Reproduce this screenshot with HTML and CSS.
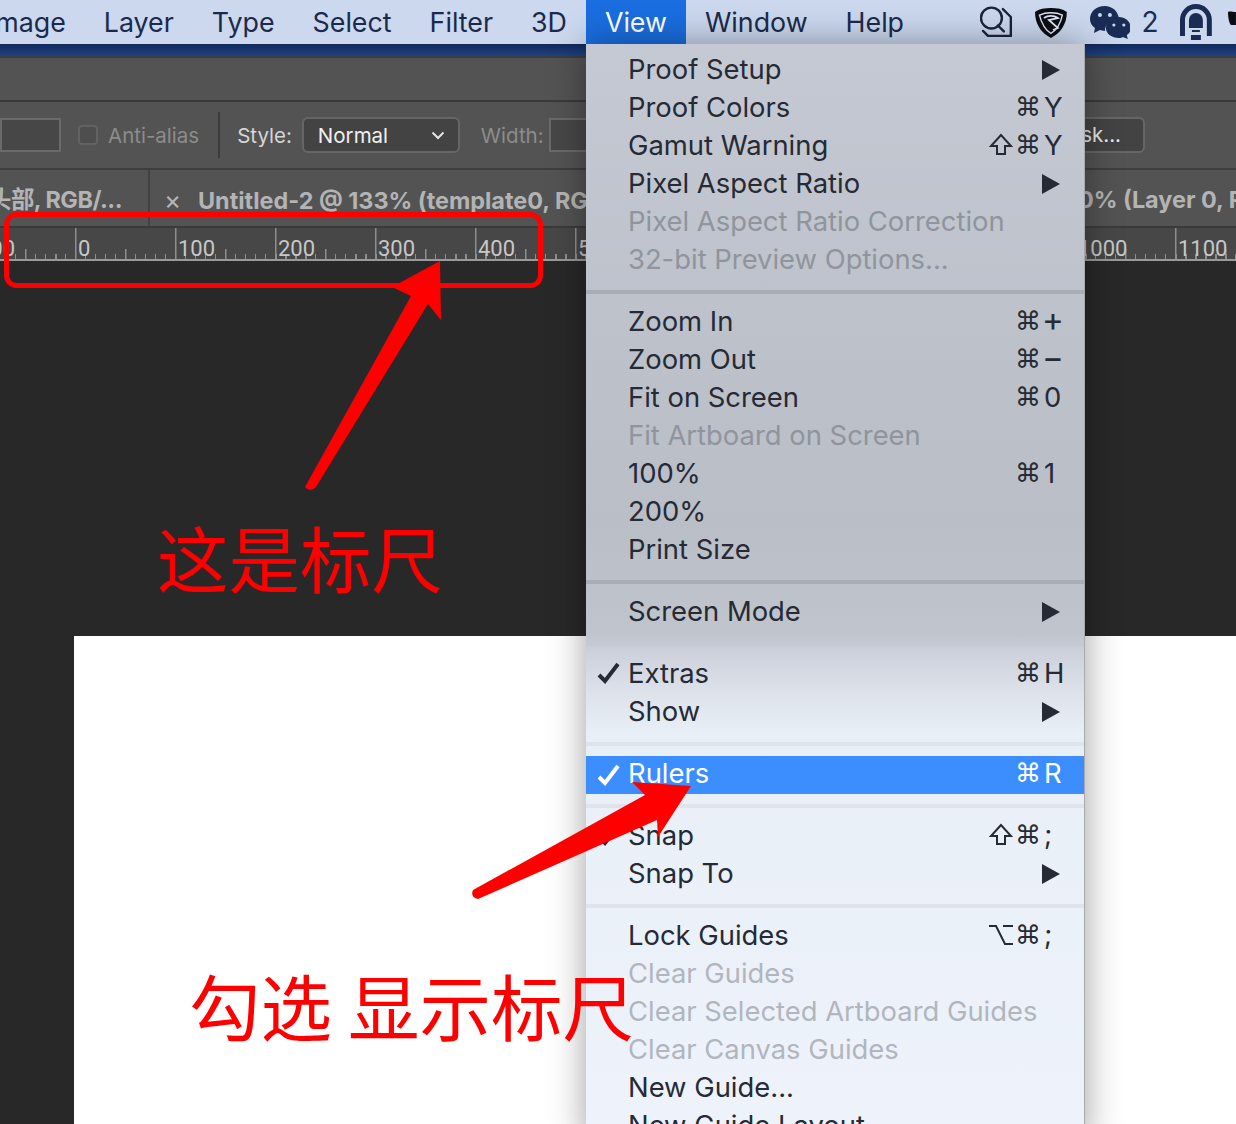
FILE: index.html
```html
<!DOCTYPE html>
<html lang="zh-CN">
<head>
  <meta charset="UTF-8" />
  <title>Rulers</title>
  <link rel="stylesheet" href="styles.css">
</head>
<body>
  <header class="menubar">
    <nav class="menus">
      <span class="menu-item">Image</span>
      <span class="menu-item">Layer</span>
      <span class="menu-item">Type</span>
      <span class="menu-item">Select</span>
      <span class="menu-item">Filter</span>
      <span class="menu-item">3D</span>
      <span class="menu-item open">View</span>
      <span class="menu-item">Window</span>
      <span class="menu-item">Help</span>
    </nav>
    <div class="tray">
      <svg class="icon-search" width="34" height="36" viewBox="0 0 34 36" fill="none" stroke="#1b2438" stroke-width="2.400" stroke-linecap="round" stroke-linejoin="round">
        <circle cx="11.500" cy="14" r="10.500"/>
        <path d="M18 21.500l6 6"/>
        <path d="M23 5l8 8v19H8l-5-5"/>
      </svg>
      <svg class="icon-shield" width="34" height="32" viewBox="0 0 34 32">
        <path d="M17 1C11 1 5 2 1 5c0 12 6 21 16 26 10-5 16-14 16-26-4-3-10-4-16-4z" fill="#0b0d14"/>
        <path d="M5.500 8C7 14 10 22 17 26.500 24 22 27 15 28.500 8 22 5 12 5 5.500 8z" fill="none" stroke="#dfe6f4" stroke-width="1.400"/>
        <path d="M10 11c4-3 10-3 14 0l-9 2 9 8-5 2" fill="none" stroke="#dfe6f4" stroke-width="1.800"/>
      </svg>
      <svg class="icon-wechat" width="42" height="34" viewBox="0 0 42 34">
        <path d="M16 1C7 1 1 7 1 14c0 4 2 7 5 9l-1 5 6-3c1 0 3 1 5 1 0-7 7-14 14-13C29 6 23 1 16 1z" fill="#1b2c54"/>
        <path d="M30 12c-7 0-13 5-13 11s6 10 13 10c2 0 3 0 4-1l5 2-1-4c3-2 4-4 4-7 0-6-5-11-12-11z" fill="#1b2c54"/>
        <circle cx="11" cy="10" r="2" fill="#cbd8ee"/><circle cx="21" cy="10" r="2" fill="#cbd8ee"/>
        <circle cx="25" cy="20" r="1.600" fill="#cbd8ee"/><circle cx="35" cy="20" r="1.600" fill="#cbd8ee"/>
      </svg>
      <span class="tray-count">2</span>
      <svg class="icon-tunnel" width="32" height="36" viewBox="0 0 32 36">
        <path d="M0 32V16a16 16 0 0 1 32 0v16h-5V16a11 11 0 0 0-22 0v16z" fill="#1b2c54"/>
        <path d="M9 16a7 7 0 0 1 14 0v8H9z" fill="#1b2c54"/>
        <path d="M12 26h8v2h-8zM11 31h10v5H11z" fill="#1b2c54"/>
      </svg>
      <svg class="icon-apple" width="8" height="18" viewBox="0 0 8 18">
        <path d="M0 5c2-1 4 0 8 0v13H3C1 16 0 10 0 5z" fill="#0b0d14"/>
      </svg>
    </div>
  </header>
  <div class="desktop-strip"></div>
  <div class="title-bar"></div>

  <div class="options-bar">
    <div class="field field-feather"></div>
    <div class="checkbox"></div>
    <span class="opt-muted">Anti-alias</span>
    <div class="opt-divider"></div>
    <span class="opt-label">Style:</span>
    <div class="select">
      <span>Normal</span>
      <svg width="14" height="9" viewBox="0 0 14 9" fill="none" stroke="#e4e4e4" stroke-width="2"><path d="M1.500 1.500L7 7l5.500-5.500"/></svg>
    </div>
    <span class="opt-muted opt-width">Width:</span>
    <div class="field field-width"></div>
    <div class="opt-button">sk...</div>
  </div>

  <div class="tabs">
    <div class="tab tab-first">头部, RGB/...</div>
    <div class="tab tab-second"><span class="tab-close">×</span>Untitled-2 @ 133% (template0, RGB/8)</div>
    <div class="tab tab-third">0% (Layer 0, RGB/8)</div>
  </div>

  <div class="ruler">
    <span class="ruler-cell">100</span>
    <span class="ruler-cell">0</span>
    <span class="ruler-cell">100</span>
    <span class="ruler-cell">200</span>
    <span class="ruler-cell">300</span>
    <span class="ruler-cell">400</span>
    <span class="ruler-cell">500</span>
    <span class="ruler-cell"></span>
    <span class="ruler-cell"></span>
    <span class="ruler-cell"></span>
    <span class="ruler-cell"></span>
    <span class="ruler-cell">1000</span>
    <span class="ruler-cell">1100</span>
    <span class="ruler-cell"></span>
  </div>

  <main class="workspace">
    <div class="document"></div>
  </main>

  <!-- View menu -->
  <div class="dropdown">
    <div class="row"><span class="label">Proof Setup</span><span class="sub"></span></div>
    <div class="row"><span class="label">Proof Colors</span><span class="mods">⌘</span><span class="key">Y</span></div>
    <div class="row"><span class="label">Gamut Warning</span><span class="mods"><svg class="mod-icon" width="24" height="24" viewBox="0 0 24 24" fill="none" stroke="currentColor" stroke-width="2"><path d="M12 2L2 13h6v8h8v-8h6z"/></svg>⌘</span><span class="key">Y</span></div>
    <div class="row"><span class="label">Pixel Aspect Ratio</span><span class="sub"></span></div>
    <div class="row off"><span class="label">Pixel Aspect Ratio Correction</span></div>
    <div class="row off"><span class="label">32-bit Preview Options...</span></div>
    <div class="sep dark"></div>
    <div class="row"><span class="label">Zoom In</span><span class="mods">⌘</span><span class="key key-math">+</span></div>
    <div class="row"><span class="label">Zoom Out</span><span class="mods">⌘</span><span class="key key-math">−</span></div>
    <div class="row"><span class="label">Fit on Screen</span><span class="mods">⌘</span><span class="key">0</span></div>
    <div class="row off"><span class="label">Fit Artboard on Screen</span></div>
    <div class="row"><span class="label">100%</span><span class="mods">⌘</span><span class="key">1</span></div>
    <div class="row"><span class="label">200%</span></div>
    <div class="row"><span class="label">Print Size</span></div>
    <div class="sep dark"></div>
    <div class="row"><span class="label">Screen Mode</span><span class="sub"></span></div>
    <div class="sep mid"></div>
    <div class="row">
      <svg class="check" width="24" height="22" viewBox="0 0 24 22" fill="none" stroke="currentColor" stroke-width="4"><path d="M2 13l6 6L21 2"/></svg>
      <span class="label">Extras</span><span class="mods">⌘</span><span class="key">H</span>
    </div>
    <div class="row"><span class="label">Show</span><span class="sub"></span></div>
    <div class="sep"></div>
    <div class="row active">
      <svg class="check" width="24" height="22" viewBox="0 0 24 22" fill="none" stroke="currentColor" stroke-width="4"><path d="M2 13l6 6L21 2"/></svg>
      <span class="label">Rulers</span><span class="mods">⌘</span><span class="key">R</span>
    </div>
    <div class="sep after-active"></div>
    <div class="row">
      <svg class="check" width="24" height="22" viewBox="0 0 24 22" fill="none" stroke="currentColor" stroke-width="4"><path d="M2 13l6 6L21 2"/></svg>
      <span class="label">Snap</span><span class="mods"><svg class="mod-icon" width="24" height="24" viewBox="0 0 24 24" fill="none" stroke="currentColor" stroke-width="2"><path d="M12 2L2 13h6v8h8v-8h6z"/></svg>⌘</span><span class="key key-semi">;</span>
    </div>
    <div class="row"><span class="label">Snap To</span><span class="sub"></span></div>
    <div class="sep"></div>
    <div class="row"><span class="label">Lock Guides</span><span class="mods"><svg class="mod-icon" width="24" height="24" viewBox="0 0 24 24" fill="none" stroke="currentColor" stroke-width="2"><path d="M0 3h7l9 18h8M14 3h10"/></svg>⌘</span><span class="key key-semi">;</span></div>
    <div class="row off"><span class="label">Clear Guides</span></div>
    <div class="row off"><span class="label">Clear Selected Artboard Guides</span></div>
    <div class="row off"><span class="label">Clear Canvas Guides</span></div>
    <div class="row"><span class="label">New Guide...</span></div>
    <div class="row"><span class="label">New Guide Layout...</span></div>
  </div>

  <!-- red annotations drawn on top of the screenshot -->
  <svg class="marks" width="1236" height="1124" viewBox="0 0 1236 1124">
    <rect x="6.500" y="214.500" width="534" height="71" rx="10" fill="none" stroke="#ff0000" stroke-width="5"/>
    <path d="M440 261L441 320L428 304L316 487Q310 493 305 487L411 296L392 287Z" fill="#ff0000"/>
    <path d="M691 786L632 782L645 795L473 890Q470 897 478 899L657 820L658 837Z" fill="#ff0000"/>
  </svg>
  <div class="note note-ruler">这是标尺</div>
  <div class="note note-check">勾选 显示标尺</div>
</body>
</html>
```

FILE: styles.css
```css
* {
  box-sizing: border-box;
}

html, body {
  margin: 0;
  height: 1124px;
  overflow: hidden;
}

body {
  position: relative;
  display: flex;
  flex-direction: column;
  font-family: Inter, "Noto Sans CJK SC", sans-serif;
  background: #282828;
}

/* top menu bar */
.menubar {
  height: 44px;
  flex: none;
  display: flex;
  justify-content: space-between;
  background: #cbd8ee;
  color: #1b2a4c;
  font-size: 26.800px;
  white-space: nowrap;
}

.menus {
  display: flex;
  margin-left: -31px;
}

.menu-item {
  padding: 0 19px;
  line-height: 44px;
}

.menu-item.open {
  background: #1a6ee0;
  color: #fff;
}

.tray {
  display: flex;
  align-items: center;
  overflow: hidden;
  width: 256px;
}

.icon-search { margin-left: 0; }
.icon-shield { margin-left: 20px; margin-top: 1px; }
.icon-wechat { margin-left: 21px; }
.tray-count { margin-left: 11px; width: 39px; color: #1b2c54; font-size: 28px; }
.icon-tunnel { margin-left: 0; }
.icon-apple { margin-left: 16px; margin-bottom: 12px; }

.desktop-strip {
  height: 12px;
  flex: none;
  background: linear-gradient(#12285a, #1f4282);
}

.title-bar {
  height: 46px;
  flex: none;
  background: #535353;
  border-bottom: 2px solid #3a3a3a;
  border-top: 2px solid #3d3d3d;
}

/* options bar */
.options-bar {
  height: 68px;
  flex: none;
  display: flex;
  align-items: center;
  background: #535353;
  border-bottom: 2px solid #3e3e3e;
  font-size: 20.500px;
  white-space: nowrap;
}

.field {
  height: 34px;
  background: #474747;
  border: 2px solid #6a6a6a;
}

.field-feather {
  width: 61px;
  flex: none;
}

.field-width {
  width: 100px;
  flex: none;
  margin-left: 5px;
}

.checkbox {
  width: 20px;
  height: 20px;
  flex: none;
  margin-left: 17px;
  border: 2px solid #626262;
  border-radius: 4px;
  background: #4e4e4e;
}

.opt-muted {
  color: #8c8c8c;
}

.checkbox + .opt-muted {
  margin-left: 10px;
}

.opt-divider {
  width: 2px;
  height: 46px;
  flex: none;
  margin: 0 17px 0 19px;
  background: #3c3c3c;
}

.opt-label {
  color: #d6d6d6;
}

.select {
  width: 158px;
  height: 36px;
  flex: none;
  margin-left: 10px;
  padding: 0 13px 0 14px;
  display: flex;
  align-items: center;
  justify-content: space-between;
  background: #434343;
  border: 2px solid #666;
  border-radius: 6px;
  color: #f0f0f0;
}

.opt-width {
  margin-left: 21px;
}

.opt-button {
  width: 70px;
  height: 36px;
  margin-left: auto;
  margin-right: 91px;
  padding-right: 22px;
  line-height: 32px;
  text-align: right;
  background: #434343;
  border: 2px solid #666;
  border-radius: 6px;
  color: #e8e8e8;
  flex: none;
}

/* document tabs */
.tabs {
  height: 58px;
  flex: none;
  display: flex;
  background: #535353;
  border-bottom: 2px solid #3a3a3a;
  font-size: 23.400px;
  font-weight: 700;
  color: #b4b4b4;
  white-space: nowrap;
  overflow: hidden;
  line-height: 60px;
}

.tab {
  flex: none;
}

.tab-first {
  width: 150px;
  padding-right: 26px;
  display: flex;
  justify-content: flex-end;
  border-right: 2px solid #424242;
  overflow: hidden;
  letter-spacing: -0.500px;
}

.tab-second {
  width: 436px;
  padding-left: 14px;
  overflow: hidden;
}

.tab-close {
  display: inline-block;
  width: 34px;
  font-weight: 400;
  font-size: 26px;
}

.tab-third {
  margin-left: 492px;
}

/* ruler */
.ruler {
  height: 33px;
  flex: none;
  display: flex;
  margin-left: -25px;
  background: #474747;
  border-bottom: 2px solid #9a9a9a;
  white-space: nowrap;
}

.ruler-cell {
  flex: none;
  width: 100px;
  padding: 9px 0 0 3px;
  font-family: Roboto, sans-serif;
  font-size: 22px;
  line-height: 24px;
  color: #c8c8c8;
  background:
    linear-gradient(#8e8e8e, #8e8e8e) 0 0 / 1.500px 100% no-repeat,
    linear-gradient(#8e8e8e, #8e8e8e) 50px 100% / 1.500px 10px no-repeat,
    repeating-linear-gradient(90deg, #8e8e8e 0 1.500px, transparent 1.500px 10px) 0 100% / 100% 5px no-repeat;
}

.workspace {
  flex: 1;
  padding-top: 375px;
  padding-left: 74px;
  background: #282828;
}

.document {
  height: 500px;
  background: #fff;
}

/* view dropdown */
.dropdown {
  position: absolute;
  left: 586px;
  top: 44px;
  width: 499px;
  padding-top: 6px;
  background: linear-gradient(#c5c9d3 0, #bcc1ca 300px, #b9bec7 480px, #bfc4cd 590px, #cdd2dc 610px, #dde2eb 650px, #e9eff7 690px, #eef3fb 1080px);
  border-right: 1px solid #a8a9ac;
  box-shadow: 0 0 34px rgba(0, 0, 0, 0.38);
  color: #252a35;
  font-size: 27.400px;
}

.row {
  position: relative;
  height: 38px;
  padding-left: 42px;
  display: flex;
  align-items: center;
  white-space: nowrap;
}

.label {
  flex: 1;
}

.off {
  color: #8f949d;
}

.dropdown .off:nth-last-child(-n+5) {
  color: #b1b6be;
}

.mods {
  width: 60px;
  display: flex;
  align-items: center;
  justify-content: flex-end;
  font-family: "DejaVu Sans", sans-serif;
  font-size: 26px;
}

.mod-icon {
  margin-right: 2px;
}

.key {
  width: 40px;
  margin-left: 3px;
  padding-right: 8px;
}

.key-math {
  font-size: 33px;
  line-height: 30px;
  height: 30px;
  margin-top: -4px;
  margin-left: 1px;
  width: 42px;
}

.key-semi {
  margin-top: -3px;
}

/* submenu arrow */
.sub {
  width: 18px;
  height: 20px;
  margin: 2px 24px 0 0;
  border-left: 18px solid currentColor;
  border-top: 10px solid transparent;
  border-bottom: 10px solid transparent;
}

.check {
  position: absolute;
  left: 11px;
  top: 8px;
}

.sep {
  height: 4px;
  margin: 12px 0 8px;
  background: #dfe4ec;
}

.sep.dark {
  background: #a9adb5;
}

.sep.mid {
  background: #c5c9d2;
}

.row.active {
  height: 38px;
  padding-bottom: 4px;
  margin-top: 10px;
  background: #3c8eff;
  color: #fff;
}

.sep:has(+ .row.active) {
  margin-bottom: 0;
}

.sep.after-active {
  margin-top: 10px;
}

/* annotations */
.marks {
  position: absolute;
  left: 0;
  top: 0;
}

.note {
  position: absolute;
  color: #ff0000;
  font-family: "Noto Sans CJK SC", sans-serif;
  font-size: 71.500px;
  line-height: 80px;
  white-space: nowrap;
}

.note-ruler {
  left: 157px;
  top: 516px;
}

.note-check {
  left: 189px;
  top: 964px;
}
```
